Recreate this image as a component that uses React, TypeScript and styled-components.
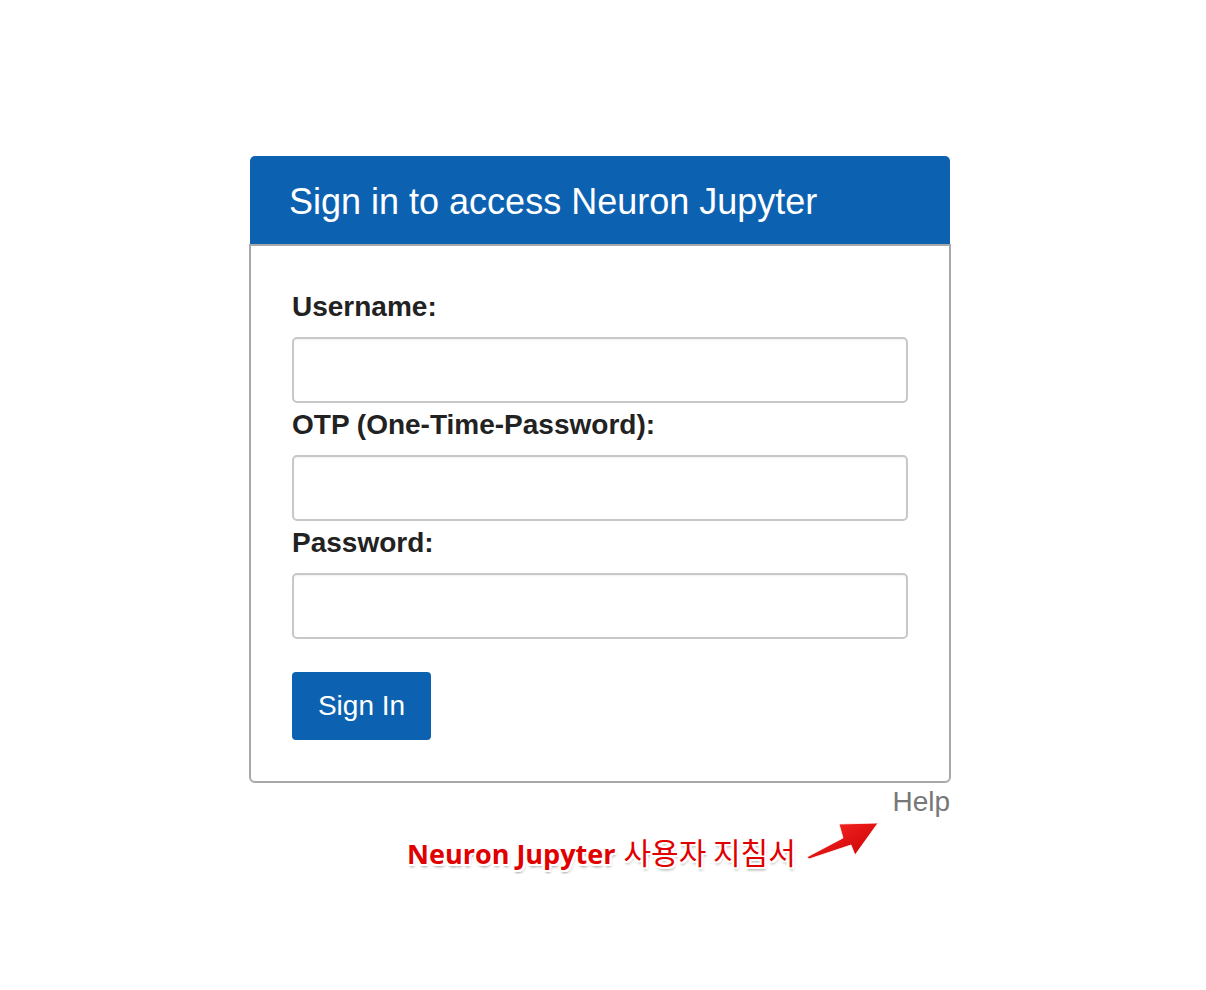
import styled, { createGlobalStyle } from "styled-components";

const GlobalStyle = createGlobalStyle`
	body {
		margin: 0;
		background: #ffffff;
		font-family: "Liberation Sans", Arial, sans-serif;
	}
`;

const StyledPage = styled.div`
	display: flex;
	justify-content: center;
	padding-top: 156px;
	padding-right: 6px;
`;

const StyledWrap = styled.div`
	width: 702px;
	display: flex;
	flex-direction: column;
`;

const StyledHeader = styled.div`
	height: 88px;
	box-sizing: border-box;
	margin: 0 1px;
	background-color: #0c62b1;
	border-radius: 5px 5px 0 0;
	padding: 4px 0 0 39px;
	display: flex;
	align-items: center;
	color: #ffffff;
	font-size: 36px;
`;

const StyledBody = styled.form`
	border: 2px solid #a8a8a8;
	border-radius: 0 0 6px 6px;
	padding: 43px 41px 41px;
	display: flex;
	flex-direction: column;
`;

const StyledLabel = styled.label`
	display: block;
	font-size: 28px;
	line-height: 36px;
	font-weight: bold;
	color: #222222;
	margin-bottom: 12px;
`;

const StyledInput = styled.input`
	box-sizing: border-box;
	width: 100%;
	height: 66px;
	border: 2px solid #c8c8c8;
	border-radius: 5px;
	margin: 0 0 4px;
	outline: none;
	box-shadow: inset 0 1px 2px rgba(0, 0, 0, 0.06);
`;

const StyledButton = styled.button`
	align-self: flex-start;
	margin-top: 29px;
	width: 139px;
	height: 68px;
	border: none;
	border-radius: 4px;
	background-color: #0c62b1;
	color: #ffffff;
	font-family: "Liberation Sans", Arial, sans-serif;
	font-size: 28px;
`;

const StyledHelp = styled.a`
	align-self: flex-end;
	margin-top: 4px;
	font-size: 28px;
	line-height: 30px;
	color: #777777;
	text-decoration: none;
	margin-right: 1px;
`;

const StyledNote = styled.div`
	display: flex;
	align-items: flex-end;
	margin-left: 158px;
	margin-top: 4px;
`;

const StyledNoteText = styled.span`
	font-family: "Open Sans", "Noto Sans CJK KR", sans-serif;
	font-size: 27px;
	line-height: 40px;
	color: #e00000;
	text-shadow: -2px 0 0 #fff, 2px 0 0 #fff, 0 -2px 0 #fff, 0 2px 0 #fff,
		-2px -2px 0 #fff, 2px 2px 0 #fff, -2px 2px 0 #fff, 2px -2px 0 #fff,
		1px 3px 3px rgba(0, 0, 0, 0.4);
`;

const StyledBold = styled.b`
	font-weight: 700;
`;

const StyledKorean = styled.span`
	font-family: "Noto Sans CJK KR", sans-serif;
	font-weight: 400;
	font-size: 30px;
	margin-left: 8px;
`;

const Arrow = () => (
	<svg width="76" height="40" viewBox="0 0 76 40" style={{ marginLeft: 9, marginBottom: 13 }}>
		<defs>
			<linearGradient id="ag" x1="0" y1="0" x2="1" y2="1">
				<stop offset="0" stopColor="#ff2a2a" />
				<stop offset="1" stopColor="#c40000" />
			</linearGradient>
		</defs>
		<polygon
			points="2,36 38,17 34,3 73,2 50,34 46,24 4,38"
			fill="url(#ag)"
			stroke="#ffffff"
			strokeWidth="0.8"
		/>
	</svg>
);

const App = () => {
	return (
		<>
			<GlobalStyle />
			<StyledPage>
				<StyledWrap>
					<StyledHeader>Sign in to access Neuron Jupyter</StyledHeader>
					<StyledBody onSubmit={(e) => e.preventDefault()}>
						<StyledLabel htmlFor="username">Username:</StyledLabel>
						<StyledInput id="username" type="text" />
						<StyledLabel htmlFor="otp">OTP (One-Time-Password):</StyledLabel>
						<StyledInput id="otp" type="text" />
						<StyledLabel htmlFor="password">Password:</StyledLabel>
						<StyledInput id="password" type="password" />
						<StyledButton type="submit">Sign In</StyledButton>
					</StyledBody>
					<StyledHelp href="#">Help</StyledHelp>
					<StyledNote>
						<StyledNoteText>
							<StyledBold>Neuron Jupyter</StyledBold>
							<StyledKorean>사용자 지침서</StyledKorean>
						</StyledNoteText>
						<Arrow />
					</StyledNote>
				</StyledWrap>
			</StyledPage>
		</>
	);
};

export default App;
